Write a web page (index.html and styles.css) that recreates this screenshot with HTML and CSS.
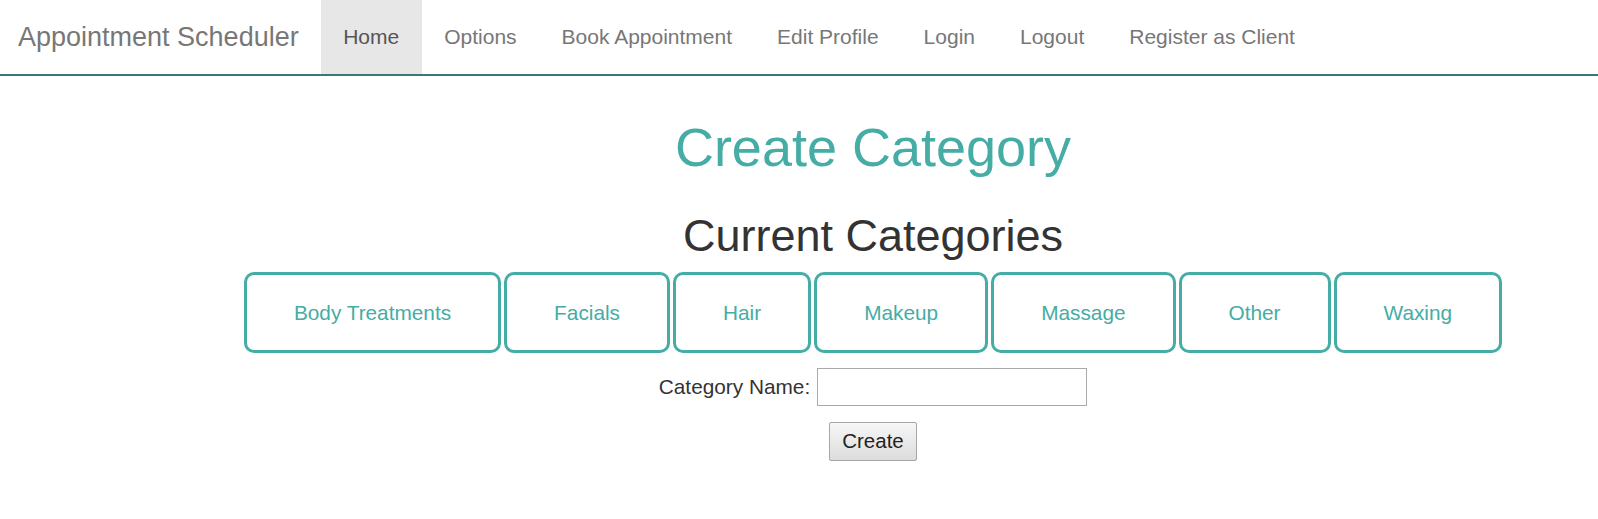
FILE: index.html
```html
<!DOCTYPE html>
<html lang="en">
<head>
<meta charset="utf-8">
<title>Create Category</title>
<link rel="stylesheet" href="styles.css">
</head>
<body>
<nav class="navbar">
  <a class="brand" href="#">Appointment Scheduler</a>
  <ul class="nav">
    <li><a class="active" href="#">Home</a></li>
    <li><a href="#">Options</a></li>
    <li><a href="#">Book Appointment</a></li>
    <li><a href="#">Edit Profile</a></li>
    <li><a href="#">Login</a></li>
    <li><a href="#">Logout</a></li>
    <li><a href="#">Register as Client</a></li>
  </ul>
</nav>
<main class="page">
  <h1 class="title">Create Category</h1>
  <h2 class="subtitle">Current Categories</h2>
  <div class="categories">
    <div class="cat">Body Treatments</div>
    <div class="cat">Facials</div>
    <div class="cat">Hair</div>
    <div class="cat">Makeup</div>
    <div class="cat">Massage</div>
    <div class="cat">Other</div>
    <div class="cat">Waxing</div>
  </div>
  <form class="form">
    <div class="field-row">
      <label class="label" for="catname">Category Name:</label>
      <input class="input" id="catname" type="text">
    </div>
    <div class="actions">
      <button class="btn" type="button">Create</button>
    </div>
  </form>
</main>
</body>
</html>
```

FILE: styles.css
```css
* { box-sizing: border-box; }
html, body { margin: 0; padding: 0; background: #fff; }
body {
  font-family: "Liberation Sans", Arial, sans-serif;
  font-size: 21px;
  line-height: 1.42857;
  color: #333;
}
.navbar {
  display: flex;
  align-items: stretch;
  height: 76px;
  border-bottom: 2px solid #3b7875;
}
.brand {
  display: block;
  padding: 0 22px 0 18px;
  font-size: 27px;
  line-height: 74px;
  color: #777;
  text-decoration: none;
}
.nav {
  display: flex;
  list-style: none;
  margin: 0;
  padding: 0;
}
.nav a {
  display: block;
  padding: 0 22.5px;
  line-height: 74px;
  height: 74px;
  color: #777;
  text-decoration: none;
}
.nav a.active {
  background: #e7e7e7;
  color: #555;
}
.page {
  padding: 0 52px 0 200px;
  text-align: center;
}
.title {
  margin: 42px 0 0;
  font-size: 54px;
  font-weight: 400;
  line-height: 1.1;
  color: #45aca6;
}
.subtitle {
  margin: 34px 0 0;
  font-size: 45px;
  font-weight: 400;
  line-height: 1.1;
  color: #333;
}
.categories {
  display: flex;
  justify-content: center;
  gap: 3px;
  margin-top: 11px;
}
.cat {
  flex: none;
  white-space: nowrap;
  border: 3px solid #45aca6;
  border-radius: 10px;
  padding: 22px 47px;
  line-height: 31px;
  color: #45aca6;
  font-size: 20.8px;
}
.form { margin: 15px 0 0; }
.field-row {
  display: flex;
  justify-content: center;
  align-items: center;
  gap: 7px;
}
.label { color: #333; font-size: 20.8px; }
.input {
  width: 270px;
  height: 38px;
  border: 1px solid #a9a9a9;
  font: inherit;
  padding: 2px 4px;
}
.actions {
  display: flex;
  justify-content: center;
  margin-top: 16px;
}
.btn {
  width: 88px;
  height: 39px;
  font-family: "Liberation Sans", Arial, sans-serif;
  font-size: 20.5px;
  color: #222;
  background: linear-gradient(#f7f7f7, #dcdcdc);
  border: 1px solid #a6a6a6;
  border-radius: 2px;
  padding: 0;
}
```
